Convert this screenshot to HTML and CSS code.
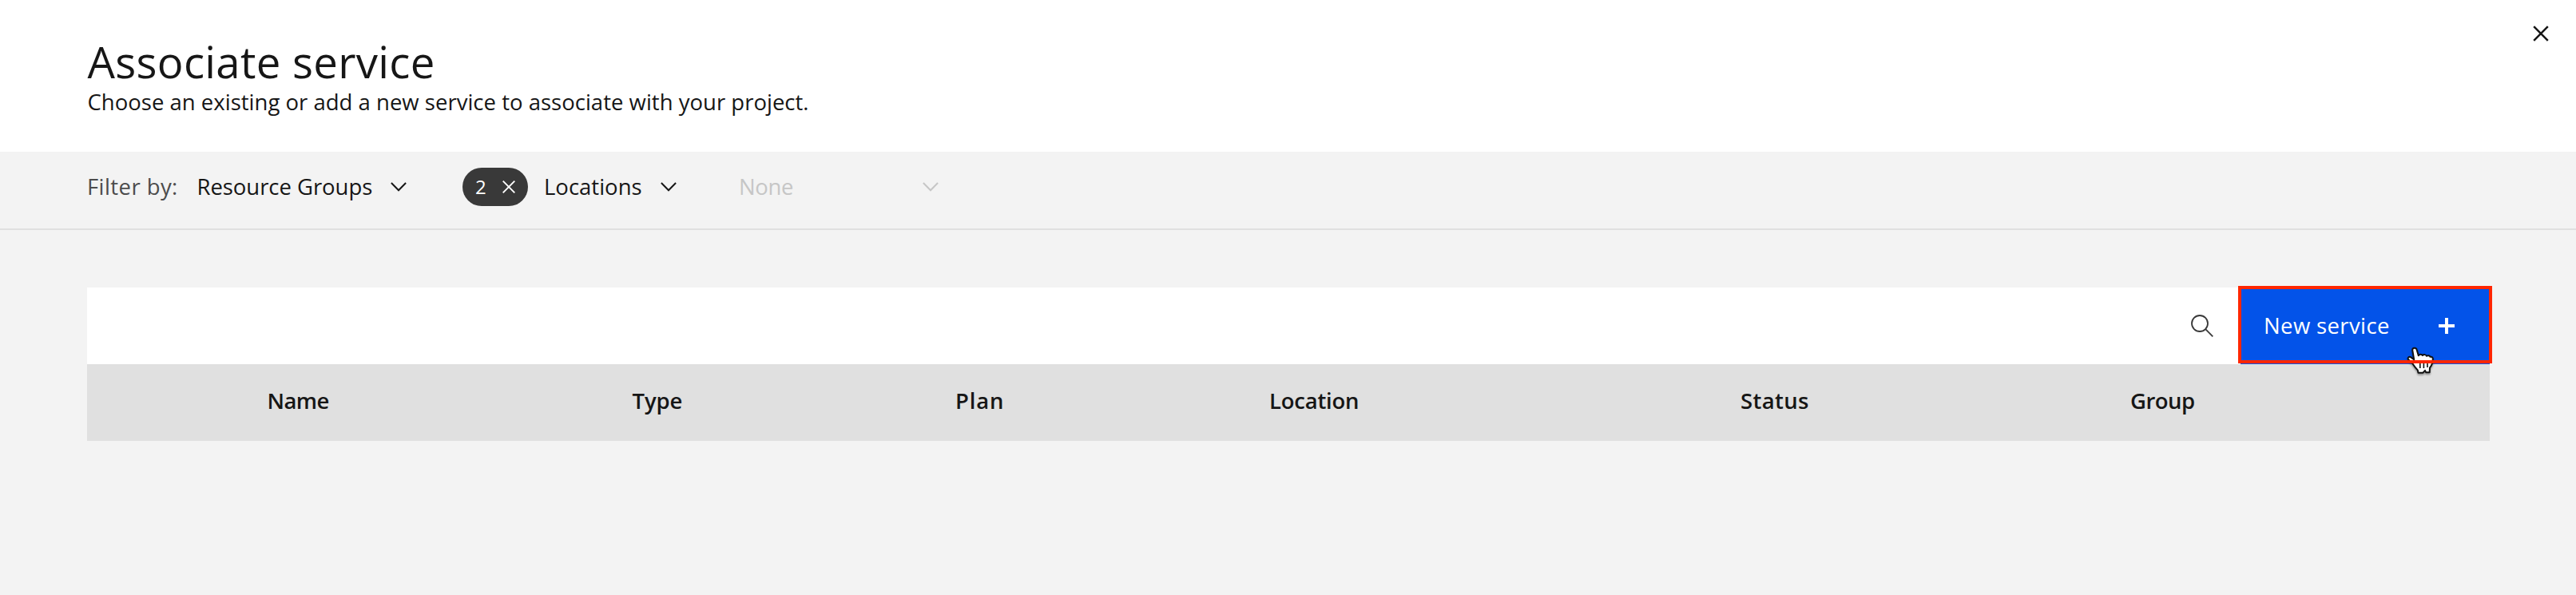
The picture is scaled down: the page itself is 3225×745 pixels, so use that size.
FILE: index.html
```html
<!DOCTYPE html>
<html lang="en">
<head>
<meta charset="utf-8">
<title>Associate service</title>
<link rel="stylesheet" href="styles.css">
</head>
<body>
<header class="header">
  <div class="heading">
    <h1 class="title">Associate service</h1>
    <p class="subtitle">Choose an existing or add a new service to associate with your project.</p>
  </div>
  <button class="close" aria-label="Close">
    <svg width="20" height="20" viewBox="0 0 20 20"><path d="M1.2 1.2L18.8 18.8M18.8 1.2L1.2 18.8" fill="none" stroke="#161616" stroke-width="2.5"/></svg>
  </button>
</header>

<section class="filters">
  <span class="filter-label">Filter by:</span>
  <div class="dropdown dropdown-groups">
    <span>Resource Groups</span>
    <svg class="chevron" width="20" height="12" viewBox="0 0 20 12"><path d="M.9 1L10 10.3L19.1 1" fill="none" stroke="currentColor" stroke-width="2"/></svg>
  </div>
  <div class="tag">
    <span class="tag-count">2</span>
    <svg width="16" height="18" viewBox="0 0 16 18"><path d="M.7 1.7L15.3 16.3M15.3 1.7L.7 16.3" fill="none" stroke="#fff" stroke-width="1.9"/></svg>
  </div>
  <div class="dropdown dropdown-locations">
    <span>Locations</span>
    <svg class="chevron" width="20" height="12" viewBox="0 0 20 12"><path d="M.9 1L10 10.3L19.1 1" fill="none" stroke="currentColor" stroke-width="2"/></svg>
  </div>
  <div class="dropdown dropdown-none">
    <span>None</span>
    <svg class="chevron" width="20" height="12" viewBox="0 0 20 12"><path d="M.9 1L10 10.3L19.1 1" fill="none" stroke="currentColor" stroke-width="2"/></svg>
  </div>
</section>

<main class="content">
  <div class="toolbar">
    <svg class="search" width="28" height="28" viewBox="0 0 28 28"><g fill="none" stroke="#393939" stroke-width="1.8"><circle cx="11" cy="11" r="10"/><path d="M18.2 18.2L27.3 27.3"/></g></svg>
    <button class="new-service">
      <span>New service</span>
      <svg width="20" height="20" viewBox="0 0 20 20"><path d="M8 0h4v8h8v4h-8v8H8v-8H0V8h8z" fill="#fff"/></svg>
      <svg class="pointer" width="40" height="40" viewBox="0 0 40 40">
        <path d="M10.2 6.2C10 3.2 14.8 2.7 15.6 5.7L17.8 13.2C19 11 22 11.3 22.9 13C24.3 11.6 27.1 11.8 28 13.8C29.5 12.7 32 13.2 32.4 14.8C34.6 14.3 36 15.5 35.8 17.6C35.7 22 34.8 25.4 32 28.4L31.7 34.2H27.1L26 31.8L23.5 34.7H17.5L16.8 31.4C13.8 28.6 11.8 25.6 10 22.8L5.2 18.3C3.7 16.4 5.6 14.1 8 15.1L12.2 18.2Z" fill="#fff" stroke="#111" stroke-width="2" stroke-linejoin="round"/>
        <path d="M19.8 20v9M24.4 20v9M29 20v8" stroke="#111" stroke-width="1.6"/>
      </svg>
      <span class="highlight"></span>
    </button>
  </div>
  <div class="table-head">
    <span class="name">Name</span>
    <span class="type">Type</span>
    <span class="plan">Plan</span>
    <span class="location">Location</span>
    <span class="status">Status</span>
    <span class="group">Group</span>
  </div>
</main>
</body>
</html>
```
FILE: styles.css
```css
* { box-sizing: border-box; }

body {
  margin: 0;
  min-height: 745px;
  background: #f3f3f3;
  color: #161616;
  font: 27.5px/40px "Open Sans", sans-serif;
}

button {
  margin: 0;
  padding: 0;
  border: 0;
  background: none;
  color: inherit;
  font: inherit;
}

svg { display: block; flex: none; }

.header {
  display: flex;
  justify-content: space-between;
  align-items: flex-start;
  height: 190px;
  padding: 32px 34px 0 109.5px;
  background: #fff;
}

.heading { padding-top: 15px; }

.title {
  margin: 0;
  font-size: 54.5px;
  font-weight: 400;
  line-height: 60px;
  letter-spacing: 0.3px;
}

.subtitle { margin: 1px 0 0; letter-spacing: 0.01px; }

.filters {
  display: grid;
  grid-template-columns: 137.5px 332.5px 102px 244px 250px;
  height: 98px;
  padding: 20px 0 28px 109px;
  border-bottom: 2px solid #e0e0e0;
  line-height: 48px;
}

.filter-label { color: #4c4c4c; letter-spacing: 0.42px; }

.dropdown {
  display: flex;
  justify-content: space-between;
  align-items: center;
  letter-spacing: -0.05px;
}

.dropdown-groups { width: 262.5px; }
.dropdown-locations { width: 166px; letter-spacing: 0; }
.dropdown-none { color: #c6c6c6; letter-spacing: -0.35px; }

.tag {
  display: flex;
  align-items: center;
  justify-content: space-between;
  width: 82px;
  height: 48px;
  padding: 0 16px;
  border-radius: 24px;
  background: #393939;
  color: #fff;
  font-size: 24px;
}

.tag-count { line-height: 46px; }

.content { padding: 72px 108px 0 109px; }

.toolbar {
  display: flex;
  justify-content: flex-end;
  align-items: center;
  gap: 34px;
  height: 96px;
  background: #fff;
}

.new-service {
  position: relative;
  display: flex;
  justify-content: space-between;
  align-items: center;
  width: 312px;
  height: 96px;
  padding: 0 44px 0 29px;
  background: #0353e9;
  color: #fff;
  letter-spacing: 0.37px;
}

.highlight {
  position: absolute;
  top: -2px;
  left: -3px;
  width: 318px;
  height: 97px;
  border: 4px solid #ff2600;
}

.pointer {
  position: absolute;
  top: 72px;
  left: 205px;
  filter: drop-shadow(0 2px 1px rgba(0, 0, 0, 0.35));
}

.table-head {
  display: grid;
  grid-template-columns: 457px 404.5px 393px 590px 488px 1fr;
  height: 96px;
  padding-left: 225.5px;
  background: #e0e0e0;
  font-weight: 600;
  line-height: 91px;
}

.name { letter-spacing: -0.57px; }
.type { letter-spacing: -0.12px; }
.plan { letter-spacing: 0.8px; }
.location { letter-spacing: -0.24px; }
.status { letter-spacing: 0.34px; }
.group { letter-spacing: -0.5px; }
```
